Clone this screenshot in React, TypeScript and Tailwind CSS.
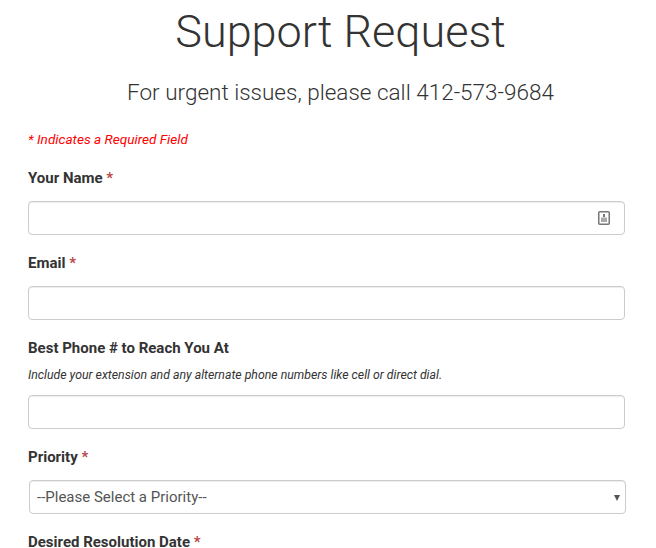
export default function App() {
  const label = "block font-bold text-[15px] leading-[20px] text-[#333]";
  const input = "block w-full h-[34px] rounded-[4px] border border-[#ccc] bg-white shadow-[inset_0_1px_1px_rgba(0,0,0,0.075)]";
  const star = <span className="text-[#b94a48]"> *</span>;
  return (
    <div className="h-[548px] overflow-hidden bg-white font-['Roboto',sans-serif] text-[#333]">
      <div className="pl-[28px] pr-[31px]">
        <div className="ml-[28px]">
          <h1 className="text-center font-light text-[45px] leading-[50px] pt-[7px] text-[#333]">Support Request</h1>
          <h3 className="text-center font-light text-[22.5px] leading-[26px] mt-[22px] text-[#333]">For urgent issues, please call 412-573-9684</h3>
        </div>
        <p className="italic text-[13.6px] leading-[20px] mt-[24px] text-[#f00] font-normal">* Indicates a Required Field</p>
        <label className={label + " mt-[19px]"}>Your Name{star}</label>
        <div className="relative mt-[13px]">
          <div className={input}></div>
          <svg className="absolute right-[15px] top-[10px]" width="12" height="14" viewBox="0 0 12 14" fill="none">
            <rect x="0.75" y="0.75" width="10.5" height="12.5" rx="1" stroke="#777" strokeWidth="1.5" />
            <rect x="5" y="3" width="2" height="3" fill="#777" />
            <rect x="3" y="6.5" width="6" height="4.5" fill="#aaa" />
          </svg>
        </div>
        <label className={label + " mt-[18px]"}>Email{star}</label>
        <div className={input + " mt-[13px]"}></div>
        <label className={label + " mt-[18px]"}>Best Phone # to Reach You At</label>
        <p className="italic text-[12.3px] leading-[17px] mt-[9px] text-[#333]">Include your extension and any alternate phone numbers like cell or direct dial.</p>
        <div className={input + " mt-[11px]"}></div>
        <label className={label + " mt-[18px]"}>Priority{star}</label>
        <div className="ml-[1px] -mr-[1px] mt-[13px] relative flex items-center h-[34px] rounded-[4px] border border-[#ccc] bg-white pl-[7px] text-[15px] text-[#555] shadow-[inset_0_1px_1px_rgba(0,0,0,0.075)]">
          <span>--Please Select a Priority--</span>
          <svg className="absolute right-[5px] top-[14px]" width="6" height="6" viewBox="0 0 6 6"><path d="M0 0H6L3 6Z" fill="#555" /></svg>
        </div>
        <label className={label + " mt-[18px]"}>Desired Resolution Date{star}</label>
      </div>
    </div>
  );
}
